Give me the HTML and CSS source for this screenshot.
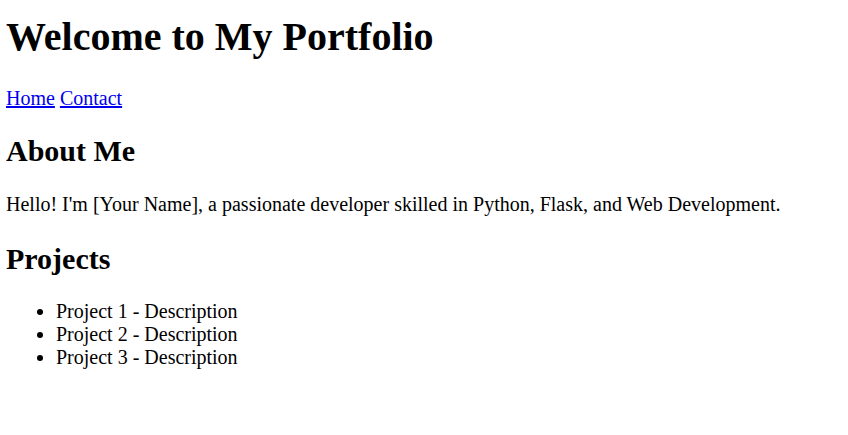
FILE: index.html
```html
<!DOCTYPE html>
<html lang="en">
<head>
<meta charset="utf-8">
<title>My Portfolio</title>
<link rel="stylesheet" href="styles.css">
</head>
<body>
<header class="site-header">
<h1 class="site-title">Welcome to My Portfolio</h1>
<nav class="site-nav"><a href="#">Home</a> <a href="#">Contact</a></nav>
</header>
<section class="section">
<h2 class="section-title">About Me</h2>
<p class="section-text">Hello! I'm [Your Name], a passionate developer skilled in Python, Flask, and Web Development.</p>
</section>
<section class="section">
<h2 class="section-title">Projects</h2>
<ul class="project-list">
<li>Project 1 - Description</li>
<li>Project 2 - Description</li>
<li>Project 3 - Description</li>
</ul>
</section>
</body>
</html>
```
FILE: styles.css
```css
body {
  font-family: "Liberation Serif", "Times New Roman", serif;
  font-size: 20px;
  margin: 0 6px 10px;
  color: #000;
  background: #fff;
}
.site-title {
  font-size: 40px;
  margin: 13px 0 26.8px;
}
.site-nav a {
  color: #0000ee;
}
.site-header {
  margin-bottom: -1px;
}
.section-title {
  font-size: 30px;
  margin: 24.9px 0;
}
.section-text {
  margin: 20px 0 26px;
}
.project-list {
  margin: 20px 0;
  padding-left: 50px;
}
```
